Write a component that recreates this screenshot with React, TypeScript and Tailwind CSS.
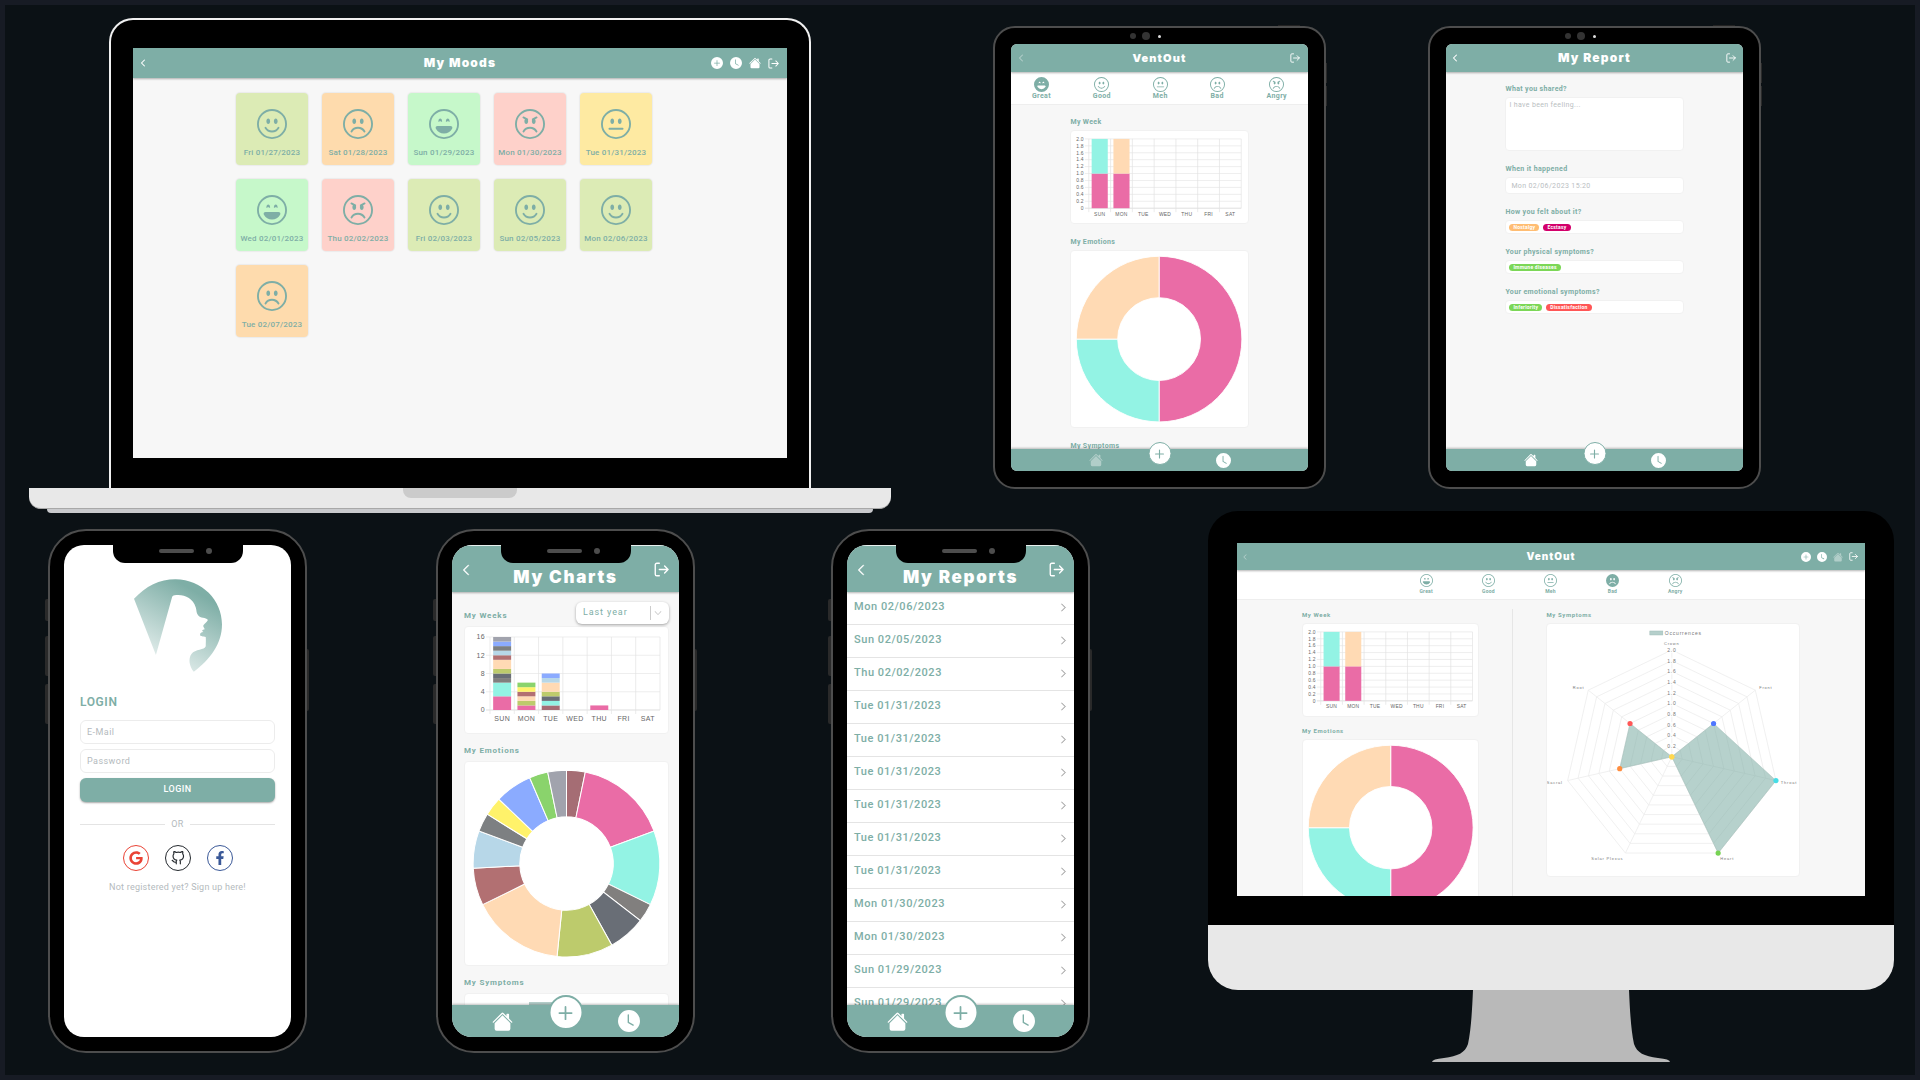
import type { ReactNode } from "react";
import {
  BsChevronDown,
  BsChevronLeft,
  BsChevronRight,
  BsClockFill,
  BsEmojiAngry,
  BsEmojiFrown,
  BsEmojiFrownFill,
  BsEmojiLaughing,
  BsEmojiLaughingFill,
  BsEmojiNeutral,
  BsEmojiSmile,
  BsHouseFill,
  BsPlus,
  BsPlusCircleFill,
} from "react-icons/bs";
import { FaFacebookF, FaGoogle } from "react-icons/fa";
import { FiGithub } from "react-icons/fi";

const PINK = "#EA6CA6";
const AQUA = "#93F3E4";
const GRAY = "#817F7E";
const SLATE = "#696E76";
const OLIVE = "#BDCB6C";
const PEACH = "#FFDAB4";
const BROWN = "#B27072";
const SKY = "#B7D7E8";
const STEEL = "#7D8082";
const BLUE = "#8BABFF";
const LAVENDER = "#A1A3AD";
const GREEN = "#8AD36C";
const YELLOW = "#FFF26A";
const MAROON = "#A56D74";

type Slice = { color: string; value: number };

const DAYS = ["SUN", "MON", "TUE", "WED", "THU", "FRI", "SAT"];

const WEEK: Slice[][] = [
  [{ color: PINK, value: 1 }, { color: AQUA, value: 1 }],
  [{ color: PINK, value: 1 }, { color: PEACH, value: 1 }],
  [], [], [], [], [],
];

const YEAR: Slice[][] = [
  [
    { color: PINK, value: 3 },
    { color: AQUA, value: 3 },
    { color: GRAY, value: 1 },
    { color: SLATE, value: 1 },
    { color: OLIVE, value: 1 },
    { color: PEACH, value: 2 },
    { color: BROWN, value: 1 },
    { color: SKY, value: 1 },
    { color: STEEL, value: 1 },
    { color: BLUE, value: 1 },
    { color: LAVENDER, value: 1 },
  ],
  [
    { color: PINK, value: 1 },
    { color: OLIVE, value: 1 },
    { color: PEACH, value: 1 },
    { color: BROWN, value: 1 },
    { color: YELLOW, value: 1 },
    { color: GREEN, value: 1 },
  ],
  [
    { color: MAROON, value: 1 },
    { color: AQUA, value: 1 },
    { color: SLATE, value: 1 },
    { color: OLIVE, value: 1 },
    { color: PEACH, value: 2 },
    { color: SKY, value: 1 },
    { color: BLUE, value: 1 },
  ],
  [],
  [{ color: PINK, value: 1 }],
  [],
  [],
];

const WEEK_EMOTIONS: Slice[] = [
  { color: PINK, value: 2 },
  { color: AQUA, value: 1 },
  { color: PEACH, value: 1 },
];

const YEAR_EMOTIONS: Slice[] = [
  { color: MAROON, value: 1 },
  { color: PINK, value: 5 },
  { color: AQUA, value: 4 },
  { color: GRAY, value: 1 },
  { color: SLATE, value: 2 },
  { color: OLIVE, value: 3 },
  { color: PEACH, value: 5 },
  { color: BROWN, value: 2 },
  { color: SKY, value: 2 },
  { color: STEEL, value: 1 },
  { color: YELLOW, value: 1 },
  { color: BLUE, value: 2 },
  { color: GREEN, value: 1 },
  { color: LAVENDER, value: 1 },
];

const MOOD_STYLE = {
  great: { Icon: BsEmojiLaughing, bg: "bg-[#C6F8CA]" },
  good: { Icon: BsEmojiSmile, bg: "bg-[#DCEBB5]" },
  meh: { Icon: BsEmojiNeutral, bg: "bg-[#FEEAA2]" },
  bad: { Icon: BsEmojiFrown, bg: "bg-[#FEDBAD]" },
  angry: { Icon: BsEmojiAngry, bg: "bg-[#FED1CA]" },
};

const MOODS: [keyof typeof MOOD_STYLE, string][] = [
  ["good", "Fri 01/27/2023"],
  ["bad", "Sat 01/28/2023"],
  ["great", "Sun 01/29/2023"],
  ["angry", "Mon 01/30/2023"],
  ["meh", "Tue 01/31/2023"],
  ["great", "Wed 02/01/2023"],
  ["angry", "Thu 02/02/2023"],
  ["good", "Fri 02/03/2023"],
  ["good", "Sun 02/05/2023"],
  ["good", "Mon 02/06/2023"],
  ["bad", "Tue 02/07/2023"],
];

const REPORTS = [
  "Mon 02/06/2023",
  "Sun 02/05/2023",
  "Thu 02/02/2023",
  "Tue 01/31/2023",
  "Tue 01/31/2023",
  "Tue 01/31/2023",
  "Tue 01/31/2023",
  "Tue 01/31/2023",
  "Tue 01/31/2023",
  "Mon 01/30/2023",
  "Mon 01/30/2023",
  "Sun 01/29/2023",
  "Sun 01/29/2023",
];

function LogoutIcon({ className }: { className: string }) {
  return (
    <svg viewBox="0 0 24 24" className={className} fill="none" stroke="currentColor" strokeWidth="2.2" strokeLinecap="round" strokeLinejoin="round">
      <path d="M8.5 2H4.5A2.5 2.5 0 0 0 2 4.500v15a2.5 2.5 0 0 0 2.5 2.500h4M8.5 12H22.500M17 6.500 22.500 12l-5.500 5.500" />
    </svg>
  );
}

function BarChart({
  data, max, step, width, height, left, right, top, bottom, labelY, font, decimals,
}: {
  data: Slice[][]; max: number; step: number; width: number; height: number; left: number; right: number;
  top: number; bottom: number; labelY: number; font: number; decimals: number;
}) {
  const unit = (bottom - top) / max;
  const column = (right - left) / DAYS.length;
  const ticks = Array.from({ length: Math.round(max / step) + 1 }, (_, i) => i * step);
  return (
    <svg viewBox={`0 0 ${width} ${height}`} className="block w-full tracking-wider" fontFamily="Liberation Sans, sans-serif" fontSize={font} fill="#666">
      {ticks.map((t) => (
        <g key={t}>
          <line x1={left - 4} x2={right} y1={bottom - t * unit} y2={bottom - t * unit} stroke={t === 0 ? "#d0d0d0" : "#e6e6e6"} strokeWidth="0.7" />
          <text x={left - 5} y={bottom - t * unit + font * 0.35} textAnchor="end">
            {t === 0 ? "0" : t.toFixed(decimals)}
          </text>
        </g>
      ))}
      {Array.from({ length: 8 }, (_, i) => (
        <line key={i} x1={left + i * column} x2={left + i * column} y1={top} y2={i === 7 ? bottom : bottom + 4} stroke="#e2e2e2" strokeWidth="0.7" />
      ))}
      {data.map((stack, i) => {
        let base = 0;
        return stack.map((s, j) => {
          const y = bottom - (base + s.value) * unit;
          base += s.value;
          return <rect key={`${i}-${j}`} x={left + i * column + column * 0.13} y={y} width={column * 0.74} height={s.value * unit} fill={s.color} />;
        });
      })}
      {DAYS.map((d, i) => (
        <text key={d} x={left + (i + 0.5) * column} y={labelY + font * 0.35} textAnchor="middle">{d}</text>
      ))}
    </svg>
  );
}

function WeekChart() {
  return <BarChart data={WEEK} max={2} step={0.2} width={178} height={93} left={18} right={172} top={8} bottom={78} labelY={84} font={5} decimals={1} />;
}

function Doughnut({ slices, inner, outer }: { slices: Slice[]; inner: number; outer: number }) {
  const total = slices.reduce((a, s) => a + s.value, 0);
  const at = (turn: number, r: number) =>
    `${(100 + r * Math.sin(turn * 2 * Math.PI)).toFixed(2)} ${(100 - r * Math.cos(turn * 2 * Math.PI)).toFixed(2)}`;
  let start = 0;
  return (
    <svg viewBox="0 0 200 200" className="block w-full">
      {slices.map((s, i) => {
        const from = start / total;
        start += s.value;
        const to = start / total;
        const large = to - from > 0.5 ? 1 : 0;
        return (
          <path
            key={i}
            d={`M${at(from, outer)}A${outer} ${outer} 0 ${large} 1 ${at(to, outer)}L${at(to, inner)}A${inner} ${inner} 0 ${large} 0 ${at(from, inner)}Z`}
            fill={s.color}
            stroke="#fff"
            strokeWidth="1"
          />
        );
      })}
    </svg>
  );
}

const CHAKRAS = [
  { name: "Crown", value: 0, color: "#FFD84F" },
  { name: "Front", value: 1, color: "#4F77FF" },
  { name: "Throat", value: 2, color: "#46DDE6" },
  { name: "Heart", value: 2, color: "#77D353" },
  { name: "Solar Plexus", value: 0, color: "#FFD84F" },
  { name: "Sacral", value: 1, color: "#FF8D3F" },
  { name: "Root", value: 1, color: "#FF5757" },
];

function RadarChart() {
  const cx = 125;
  const cy = 133;
  const radius = 107;
  const point = (i: number, r: number) => {
    const a = (i * 2 * Math.PI) / 7;
    return { x: cx + r * Math.sin(a), y: cy - r * Math.cos(a) };
  };
  const ring = (r: number) => CHAKRAS.map((_, i) => `${point(i, r).x},${point(i, r).y}`).join(" ");
  return (
    <svg viewBox="0 0 252 252" className="block w-full tracking-wider" fontFamily="Liberation Sans, sans-serif" fill="#777">
      {Array.from({ length: 10 }, (_, i) => (
        <polygon key={i} points={ring((radius * (i + 1)) / 10)} fill="none" stroke="#ececec" strokeWidth="0.8" />
      ))}
      {CHAKRAS.map((c, i) => (
        <line key={c.name} x1={cx} y1={cy} x2={point(i, radius).x} y2={point(i, radius).y} stroke="#ececec" strokeWidth="0.8" />
      ))}
      <polygon
        points={CHAKRAS.map((c, i) => `${point(i, (radius * c.value) / 2).x},${point(i, (radius * c.value) / 2).y}`).join(" ")}
        fill="#7EAEA6"
        fillOpacity="0.57"
        stroke="#a9c3be"
        strokeWidth="0.6"
      />
      {Array.from({ length: 10 }, (_, i) => (
        <g key={i}>
          <rect x={cx - 5} y={cy - (radius * (i + 1)) / 10 - 3} width="10" height="6" fill="#fff" fillOpacity="0.7" />
          <text x={cx} y={cy - (radius * (i + 1)) / 10 + 2} textAnchor="middle" fontSize="5">
            {((i + 1) / 5).toFixed(1)}
          </text>
        </g>
      ))}
      {CHAKRAS.map((c, i) => {
        const p = point(i, (radius * c.value) / 2);
        return <circle key={c.name} cx={p.x} cy={p.y} r="2.600" fill={c.color} />;
      })}
      {CHAKRAS.map((c, i) => {
        const p = point(i, radius + 5);
        const anchor = i === 0 ? "middle" : i < 4 ? "start" : "end";
        return (
          <text key={c.name} x={p.x} y={p.y + (i === 0 ? 0 : 2)} textAnchor={anchor} fontSize="4">
            {c.name}
          </text>
        );
      })}
      <rect x="103" y="7" width="13" height="4" fill="#B5CFCB" stroke="#9fbcb7" strokeWidth="0.5" />
      <text x="118" y="11" fontSize="5">Occurrences</text>
    </svg>
  );
}

function Header({ title, back, titleClass, className, children }: { title: string; back: ReactNode; titleClass: string; className: string; children: ReactNode }) {
  return (
    <header className={`relative z-10 grid shrink-0 grid-cols-[1fr_auto_1fr] bg-[#7EAEA6] text-white shadow-[0_1px_2px_rgba(0,0,0,0.3)] ${className}`}>
      {back}
      <h1 className={`font-['Inter',sans-serif] font-black tracking-widest ${titleClass}`}>{title}</h1>
      <div className="flex justify-end">{children}</div>
    </header>
  );
}

function Card({ className = "", children }: { className?: string; children?: ReactNode }) {
  return <div className={`overflow-hidden rounded border border-[#f1f1f1] bg-white ${className}`}>{children}</div>;
}

function BottomNav({ size, homeDimmed = false }: { size: "phone" | "tablet"; homeDimmed?: boolean }) {
  const phone = size === "phone";
  return (
    <nav className={`relative z-10 flex shrink-0 items-center justify-center bg-[#7EAEA6] text-white shadow-[0_-1px_2px_rgba(0,0,0,0.25)] ${phone ? "h-8 gap-[105px]" : "h-[22px] gap-[113px]"}`}>
      <button aria-label="Home" className={homeDimmed ? "opacity-40" : ""}>
        <BsHouseFill className={phone ? "size-[21px]" : "size-3.5"} />
      </button>
      <button
        aria-label="Add"
        className={`absolute left-1/2 flex -translate-x-1/2 items-center justify-center rounded-full border-[#7EAEA6] bg-white text-[#7EAEA6] ${phone ? "-top-2.5 size-[35px] border-2" : "-top-[7px] size-[23px] border"}`}
      >
        <BsPlus className={phone ? "size-7 shrink-0" : "size-[18px] shrink-0"} />
      </button>
      <button aria-label="History">
        <BsClockFill className={phone ? "size-[22px]" : "size-[15px]"} />
      </button>
    </nav>
  );
}

function MoodBar({ selected, className, iconClass, textClass }: { selected: string; className: string; iconClass: string; textClass: string }) {
  const items = [
    { name: "Great", Icon: selected === "Great" ? BsEmojiLaughingFill : BsEmojiLaughing },
    { name: "Good", Icon: BsEmojiSmile },
    { name: "Meh", Icon: BsEmojiNeutral },
    { name: "Bad", Icon: selected === "Bad" ? BsEmojiFrownFill : BsEmojiFrown },
    { name: "Angry", Icon: BsEmojiAngry },
  ];
  return (
    <div className={`flex shrink-0 items-center border-b border-[#eeeeee] bg-white text-[#7EAEA6] ${className}`}>
      {items.map(({ name, Icon }) => (
        <button key={name} className="flex flex-col items-center">
          <Icon className={iconClass} />
          <span className={`font-bold tracking-wider ${textClass}`}>{name}</span>
        </button>
      ))}
    </div>
  );
}

function Label({ children, htmlFor }: { children: ReactNode; htmlFor?: string }) {
  const cls = "mb-0.5 block text-[7px] leading-3 font-bold tracking-wider text-[#7EAEA6]";
  return htmlFor ? <label htmlFor={htmlFor} className={cls}>{children}</label> : <h2 className={cls}>{children}</h2>;
}

function Phone({ children }: { children: ReactNode }) {
  return (
    <div className="relative rounded-[38px] border-2 border-[#4d4d4d] bg-black p-3.5">
      <span className="absolute top-[68px] -left-[5px] h-[22px] w-[3px] rounded-l-xs bg-[#2a2a2a]" />
      <span className="absolute top-[105px] -left-[5px] h-10 w-[3px] rounded-l-xs bg-[#2a2a2a]" />
      <span className="absolute top-[153px] -left-[5px] h-10 w-[3px] rounded-l-xs bg-[#2a2a2a]" />
      <span className="absolute top-[118px] -right-1 h-[62px] w-0.5 rounded-r-xs bg-[#2a2a2a]" />
      <div className="relative flex aspect-[227/492] flex-col overflow-hidden rounded-[20px] bg-white">
        <div className="absolute top-0 left-1/2 z-20 flex h-[18px] w-[130px] -translate-x-1/2 items-center justify-center gap-3 rounded-b-xl bg-black pb-1.5 pl-4">
          <span className="h-1 w-[35px] rounded-full bg-[#4d4d4d]" />
          <span className="size-1.5 rounded-full bg-[#4d4d4d]" />
        </div>
        {children}
      </div>
    </div>
  );
}

function Tablet({ children }: { children: ReactNode }) {
  return (
    <div className="relative mt-2 rounded-[22px] border-2 border-[#4d4d4d] bg-black px-4 pb-4">
      <span className="absolute -top-[3px] right-6 h-px w-[22px] bg-[#222]" />
      <span className="absolute top-[35px] -right-[3px] h-5 w-px bg-[#2a2a2a]" />
      <span className="absolute top-[58px] -right-[3px] h-5 w-px bg-[#2a2a2a]" />
      <div className="mr-7 flex h-4 items-center justify-center gap-1.5">
        <span className="size-1.5 rounded-full bg-[#333]" />
        <span className="size-2 rounded-full bg-[#333]" />
        <span className="ml-0.5 size-[3px] rounded-full bg-[#ddd]" />
      </div>
      <div className="flex aspect-[297/427] flex-col overflow-hidden rounded-md bg-[#f7f7f7]">{children}</div>
    </div>
  );
}

function BackButton({ iconClass, className = "" }: { iconClass: string; className?: string }) {
  return (
    <button aria-label="Back" className={`justify-self-start ${className}`}>
      <BsChevronLeft className={iconClass} strokeWidth={1} />
    </button>
  );
}

function Laptop() {
  return (
    <div className="min-w-0">
      <div className="mx-20 rounded-t-3xl border-2 border-b-0 border-[#f0f0f0] bg-black px-[22px] pt-7 pb-[30px]">
        <div className="flex aspect-[654/410] flex-col overflow-hidden bg-[#f7f7f7]">
          <Header title="My Moods" titleClass="text-xs" className="h-[30px] items-center px-2" back={<BackButton iconClass="size-2" className="-ml-0.5" />}>
            <div className="flex items-center gap-[7px]">
              <button aria-label="Add"><BsPlusCircleFill className="size-3" /></button>
              <button aria-label="History"><BsClockFill className="size-3" /></button>
              <button aria-label="Home"><BsHouseFill className="size-3" /></button>
              <button aria-label="Log out"><LogoutIcon className="size-[11px]" /></button>
            </div>
          </Header>
          <div className="flex min-h-0 flex-1 flex-wrap content-start gap-3.5 overflow-hidden px-[103px] pt-[15px]">
            {MOODS.map(([mood, date]) => {
              const { Icon, bg } = MOOD_STYLE[mood];
              return (
                <button key={date} className={`flex size-[72px] flex-col items-center rounded pt-4 text-[#7EAEA6] shadow-[0_0_1px_1px_rgba(0,0,0,0.05)] ${bg}`}>
                  <Icon className="size-[30px]" />
                  <span className="mt-2 text-[8px] leading-3 font-medium tracking-wide whitespace-nowrap">{date}</span>
                </button>
              );
            })}
          </div>
        </div>
      </div>
      <div className="flex h-[21px] justify-center rounded-b-xl border-b border-[#a8a8a8] bg-[#e8e8e8]">
        <div className="h-2.5 w-[114px] rounded-b-lg bg-[#cbcbcb]" />
      </div>
      <div className="mx-[18px] h-1 rounded-b-sm bg-[#c8c9cc]" />
    </div>
  );
}

function HomeTablet() {
  return (
    <Tablet>
      <Header title="VentOut" titleClass="text-[11px]" className="h-7 items-center px-1.5" back={<BackButton iconClass="size-2" className="opacity-40" />}>
        <button aria-label="Log out" className="mr-0.5"><LogoutIcon className="size-2.5" /></button>
      </Header>
      <MoodBar selected="Great" className="h-[33px] justify-around" iconClass="size-[15px]" textClass="text-[7px] leading-2" />
      <main className="mx-auto flex min-h-0 w-3/5 flex-1 flex-col gap-3 overflow-hidden pt-[11px]">
        <section><Label>My Week</Label><Card><WeekChart /></Card></section>
        <section><Label>My Emotions</Label><Card><Doughnut slices={WEEK_EMOTIONS} inner={47} outer={94} /></Card></section>
        <section><Label>My Symptoms</Label></section>
      </main>
      <BottomNav size="tablet" homeDimmed />
    </Tablet>
  );
}

function Pill({ className, children }: { className: string; children: ReactNode }) {
  return <span className={`flex h-[7px] items-center rounded-full px-1 text-[5px] leading-none font-bold tracking-wider text-white ${className}`}>{children}</span>;
}

function ReportTablet() {
  return (
    <Tablet>
      <Header title="My Report" titleClass="text-xs" className="h-7 items-center px-[5px]" back={<BackButton iconClass="size-2" />}>
        <button aria-label="Log out" className="mr-0.5"><LogoutIcon className="size-2.5" /></button>
      </Header>
      <main className="mx-auto flex min-h-0 w-3/5 flex-1 flex-col gap-3 overflow-hidden pt-[11px]">
        <div>
          <Label htmlFor="shared">What you shared?</Label>
          <textarea id="shared" placeholder="I have been feeling..." className="block h-[54px] w-full resize-none rounded border border-[#f1f1f1] bg-white p-[3px] text-[7px] leading-2 tracking-wider placeholder:text-[#b9bec2]" />
        </div>
        <div>
          <Label htmlFor="when">When it happened</Label>
          <input id="when" placeholder="Mon 02/06/2023 15:20" className="block h-[17px] w-full rounded border border-[#f1f1f1] bg-white px-[5px] text-[7px] tracking-wider placeholder:text-[#b9bec2]" />
        </div>
        <section>
          <Label>How you felt about it?</Label>
          <Card className="flex h-3.5 items-center gap-1 px-[3px]">
            <Pill className="bg-[#FFBD73]">Nostalgy</Pill>
            <Pill className="bg-[#D3006B]">Ecstasy</Pill>
          </Card>
        </section>
        <section>
          <Label>Your physical symptoms?</Label>
          <Card className="flex h-3.5 items-center gap-1 px-[3px]">
            <Pill className="bg-[#7CD757]">Immune diseases</Pill>
          </Card>
        </section>
        <section>
          <Label>Your emotional symptoms?</Label>
          <Card className="flex h-3.5 items-center gap-1 px-[3px]">
            <Pill className="bg-[#7CD757]">Inferiority</Pill>
            <Pill className="bg-[#FF5656]">Dissatisfaction</Pill>
          </Card>
        </section>
      </main>
      <BottomNav size="tablet" />
    </Tablet>
  );
}

function Logo() {
  return (
    <svg viewBox="23 27 265 279" className="h-[93px] w-[88px]" aria-label="VentOut">
      <defs>
        <linearGradient id="logo-fade" gradientUnits="userSpaceOnUse" x1="235" y1="80" x2="110" y2="300">
          <stop offset="0" stopColor="#7EAEA6" />
          <stop offset="1" stopColor="#EAF2F1" />
        </linearGradient>
      </defs>
      <path
        fill="url(#logo-fade)"
        d="M23 86C58 48 100 27 148 27C228 28 288 90 288 163C288 222 252 270 203 306C189 288 186 266 196 252C207 237 236 241 239 229C239 218 240 210 239 201C231 199 223 200 222 195C221 190 225 187 232 186C226 182 228 180 236 178C234 173 230 170 232 166C235 160 246 154 245 149C240 143 222 145 216 136C210 128 212 122 209 112C200 84 176 73 150 75C143 76 140 76 138 80L89 255Z"
      />
    </svg>
  );
}

function LoginPhone() {
  const field = "block h-6 w-full rounded-md border border-[#ececec] bg-white px-1.5 text-[9px] tracking-wider placeholder:text-[#b4babd]";
  const social = "flex size-[26px] items-center justify-center rounded-full border";
  return (
    <Phone>
      <main className="flex flex-col items-center px-4 pt-[34px] text-[#b4babd]">
        <Logo />
        <form className="mt-[22px] w-full" onSubmit={(e) => e.preventDefault()}>
          <h1 className="mb-2.5 text-xs leading-4 font-semibold tracking-wider text-[#7EAEA6]">LOGIN</h1>
          <input aria-label="E-Mail" placeholder="E-Mail" className={field} />
          <input aria-label="Password" type="password" placeholder="Password" className={`mt-[5px] ${field}`} />
          <button className="mt-[5px] block h-6 w-full rounded-md bg-[#7EAEA6] text-[9px] font-medium tracking-wider text-white shadow-[0_1px_2px_rgba(0,0,0,0.35)]">LOGIN</button>
        </form>
        <div className="mt-4 flex w-full items-center gap-1.5 text-[9px] leading-3 tracking-wider">
          <span className="h-px flex-1 bg-[#e4e4e4]" />
          OR
          <span className="h-px flex-1 bg-[#e4e4e4]" />
        </div>
        <div className="mt-[15px] flex gap-4">
          <button aria-label="Google" className={`${social} border-[#EA4335] text-[#EA4335]`}><FaGoogle className="size-3.5" /></button>
          <button aria-label="GitHub" className={`${social} border-[#24292E] text-[#24292E]`}><FiGithub className="size-3.5" /></button>
          <button aria-label="Facebook" className={`${social} border-[#3B5998] text-[#3B5998]`}><FaFacebookF className="size-3.5" /></button>
        </div>
        <a href="#signup" className="mt-2.5 text-[9px] leading-3 tracking-wide">Not registered yet? Sign up here!</a>
      </main>
    </Phone>
  );
}

function PhoneHeader({ title }: { title: string }) {
  return (
    <Header title={title} titleClass="text-[17px] leading-8" className="h-[47px] items-start border-t border-[#e8efee] px-2.5 pt-[15px]" back={<BackButton iconClass="size-3" className="-ml-0.5 py-[3px]" />}>
      <button aria-label="Log out" className="mt-px"><LogoutIcon className="size-[15px]" /></button>
    </Header>
  );
}

function ChartsPhone() {
  const title = "block text-[8px] leading-4 font-bold tracking-widest text-[#7EAEA6]";
  return (
    <Phone>
      <PhoneHeader title="My Charts" />
      <main className="min-h-0 flex-1 overflow-hidden bg-[#f7f7f7] pt-2.5 pr-2.5 pl-3">
        <div className="flex items-end justify-between">
          <h2 className={title}>My Weeks</h2>
          <div className="relative text-[#7EAEA6]">
            <select aria-label="Period" className="block h-[22px] w-[93px] appearance-none rounded-md bg-white pl-[7px] text-[9px] tracking-widest shadow-[0_1px_3px_rgba(0,0,0,0.35)]">
              <option>Last year</option>
              <option>Last month</option>
            </select>
            <span className="pointer-events-none absolute inset-y-1 right-[7px] flex items-center border-l border-[#ccc] pl-[3px] text-[#aaa]">
              <BsChevronDown className="size-2" />
            </span>
          </div>
        </div>
        <Card className="mt-0.5">
          <BarChart data={YEAR} max={16} step={4} width={203} height={106} left={25} right={195} top={10} bottom={83} labelY={92} font={7} decimals={0} />
        </Card>
        <h2 className={`mt-[9px] mb-0.5 ${title}`}>My Emotions</h2>
        <Card><Doughnut slices={YEAR_EMOTIONS} inner={46} outer={92} /></Card>
        <h2 className={`mt-[9px] mb-0.5 ${title}`}>My Symptoms</h2>
        <Card className="h-10 pl-16"><div className="mt-2 h-2 w-6 bg-[#B5CFCB]" /></Card>
      </main>
      <BottomNav size="phone" />
    </Phone>
  );
}

function ReportsPhone() {
  return (
    <Phone>
      <PhoneHeader title="My Reports" />
      <ul className="min-h-0 flex-1 overflow-hidden bg-white">
        {REPORTS.map((date, i) => (
          <li key={i}>
            <button className="flex h-[33px] w-full items-center justify-between border-b border-[#e4e4e4] pr-1.5 pb-0.5 pl-[7px] text-[11px] font-medium tracking-wider text-[#7EAEA6]">
              {date}
              <BsChevronRight className="size-[9px] text-[#aaa]" strokeWidth={1} />
            </button>
          </li>
        ))}
      </ul>
      <BottomNav size="phone" />
    </Phone>
  );
}

function Monitor() {
  const title = "mb-0.5 text-[6px] leading-3 font-bold tracking-widest text-[#7EAEA6]";
  return (
    <div>
      <div className="rounded-t-[30px] bg-black px-[29px] pt-8 pb-[29px]">
        <div className="flex aspect-[628/353] flex-col overflow-hidden bg-[#f7f7f7]">
          <Header title="VentOut" titleClass="text-[10px]" className="h-[27px] items-center px-[7px]" back={<BackButton iconClass="size-1.5" className="-ml-0.5 opacity-40" />}>
            <div className="flex items-center gap-1.5">
              <button aria-label="Add"><BsPlusCircleFill className="size-2.5" /></button>
              <button aria-label="History"><BsClockFill className="size-2.5" /></button>
              <button aria-label="Home" className="opacity-40"><BsHouseFill className="size-2.5" /></button>
              <button aria-label="Log out"><LogoutIcon className="size-[9px]" /></button>
            </div>
          </Header>
          <MoodBar selected="Bad" className="h-[30px] justify-center gap-[49px]" iconClass="size-[13px]" textClass="text-[5px] leading-2" />
          <main className="flex min-h-0 flex-1 overflow-hidden px-[65px] pt-[9px]">
            <div className="min-w-0 flex-[177]">
              <h2 className={title}>My Week</h2>
              <Card><WeekChart /></Card>
              <h2 className={`mt-2 ${title}`}>My Emotions</h2>
              <Card><Doughnut slices={WEEK_EMOTIONS} inner={47} outer={94} /></Card>
            </div>
            <div className="mx-[33px] w-px shrink-0 bg-[#e6e6e6]" />
            <div className="min-w-0 flex-[253]">
              <h2 className={title}>My Symptoms</h2>
              <Card><RadarChart /></Card>
            </div>
          </main>
        </div>
      </div>
      <div className="h-[65px] rounded-b-[30px] bg-[#e8e8e8]" />
      <svg viewBox="0 0 238 72" className="mx-auto block w-[238px]">
        <path d="M41 0H197C198 22 199 40 202 54C205 63 212 66 226 68Q238 69 238 72H0Q0 69 12 68C26 66 33 63 36 54C39 40 40 22 41 0Z" fill="#b9b9b9" />
      </svg>
    </div>
  );
}

export default function App() {
  return (
    <div className="min-h-screen border-[5px] border-[#171b24] bg-[#0b1115] font-['Roboto',sans-serif]">
      <div className="grid grid-cols-[862fr_333fr_333fr] items-start gap-[102px] pt-[13px] pr-[154px] pl-6">
        <Laptop />
        <HomeTablet />
        <ReportTablet />
      </div>
      <div className="-mt-0.5 flex items-start pr-[21px] pl-[43px]">
        <div className="mt-[18px] min-w-0 flex-[259]"><LoginPhone /></div>
        <div className="mt-[18px] ml-[129px] min-w-0 flex-[259]"><ChartsPhone /></div>
        <div className="mt-[18px] ml-[136px] min-w-0 flex-[259]"><ReportsPhone /></div>
        <div className="ml-[118px] min-w-0 flex-[686]"><Monitor /></div>
      </div>
    </div>
  );
}
